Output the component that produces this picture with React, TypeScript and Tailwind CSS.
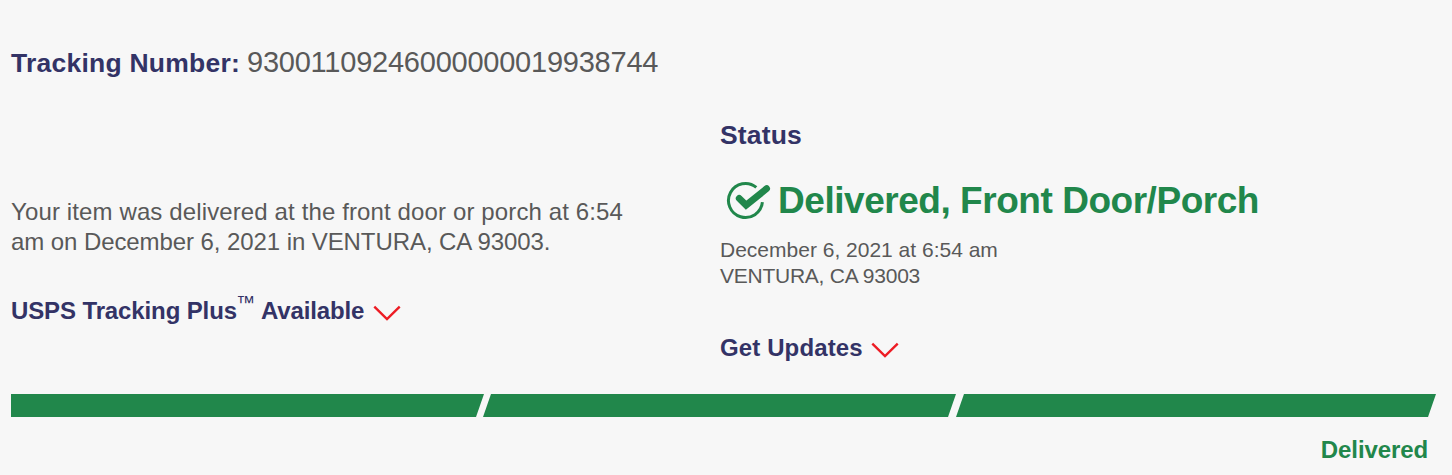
function Chevron() {
  return (
    <svg className="h-4 w-7 shrink-0" viewBox="0 0 28 16" fill="none" stroke="#ed1c24" strokeWidth="2.4">
      <path d="M1.3 1.6 L14 14.1 L26.7 1.6" />
    </svg>
  );
}

function CheckCircle() {
  return (
    <svg className="h-[40px] w-[46px] shrink-0" viewBox="0 0 46 40" fill="none" stroke="#21874b">
      <path d="M30.3 6.4 A17 17 0 1 0 36.4 21.2" strokeWidth="3" />
      <path d="M13.2 17.3 L20.1 24.2 L40.6 7.7" strokeWidth="6.8" strokeLinecap="round" />
    </svg>
  );
}

export default function App() {
  return (
    <main className="flex h-[475px] w-[1452px] flex-col overflow-hidden bg-[#f7f7f7] pl-[11px] font-['Liberation_Sans',Arial,sans-serif] text-[#595959]">
      <header className="flex h-[119px] items-baseline pt-[46px] leading-8 whitespace-nowrap">
        <h1 className="w-[236px] text-[26.5px] font-bold tracking-[0.23px] text-[#333366]">Tracking Number:</h1>
        <span className="text-[29px] tracking-[-0.23px]">93001109246000000019938744</span>
      </header>
      <div className="flex h-[275px]">
        <section className="w-[709px] pt-[78px]">
          <p className="text-[24px] leading-[30px] whitespace-nowrap">
            <span className="tracking-[0.125px]">Your item was delivered at the front door or porch at 6:54</span>
            <br />
            <span className="tracking-[-0.08px]">am on December 6, 2021 in VENTURA, CA 93003.</span>
          </p>
          <div className="mt-[39px] flex h-[30px] items-center text-[24px] leading-[30px] font-bold whitespace-nowrap text-[#333366]">
            <span className="flex w-[362px]">
              <span className="w-[225px] tracking-[-0.12px]">USPS Tracking Plus</span>
              <span className="-mt-[8px] w-[25px] text-[19px] font-normal">™</span>
              <span className="tracking-[-0.15px]">Available</span>
            </span>
            <div className="pt-1">
              <Chevron />
            </div>
          </div>
        </section>
        <section className="whitespace-nowrap">
          <h2 className="text-[26.5px] leading-8 font-bold tracking-[0.15px] text-[#333366]">Status</h2>
          <div className="mt-[29px] flex h-[42px] items-center pl-[6px]">
            <CheckCircle />
            <strong className="ml-[6px] text-[37px] leading-[42px] tracking-[-0.46px] text-[#21874b]">
              Delivered, Front Door/Porch
            </strong>
          </div>
          <p className="mt-[15px] text-[21px] leading-[26px]">
            December 6, 2021 at 6:54 am
            <br />
            <span className="tracking-[-0.25px]">VENTURA, CA 93003</span>
          </p>
          <div className="mt-[44px] flex h-[30px] items-center text-[24px] leading-[30px] font-bold text-[#333366]">
            <span className="w-[151px] tracking-[0.12px]">Get Updates</span>
            <div className="pt-1">
              <Chevron />
            </div>
          </div>
        </section>
      </div>
      <svg className="h-[23px] w-[1425px] shrink-0" viewBox="0 0 1425 23" fill="#21874b">
        <path d="M0 0H473L465 23H0Z" />
        <path d="M480 0H945L937 23H472Z" />
        <path d="M953 0H1425L1417 23H945Z" />
      </svg>
      <footer className="mt-[18px] flex justify-end pr-6 text-[24px] leading-[30px] font-bold tracking-[-0.1px] text-[#21874b]">
        Delivered
      </footer>
    </main>
  );
}
